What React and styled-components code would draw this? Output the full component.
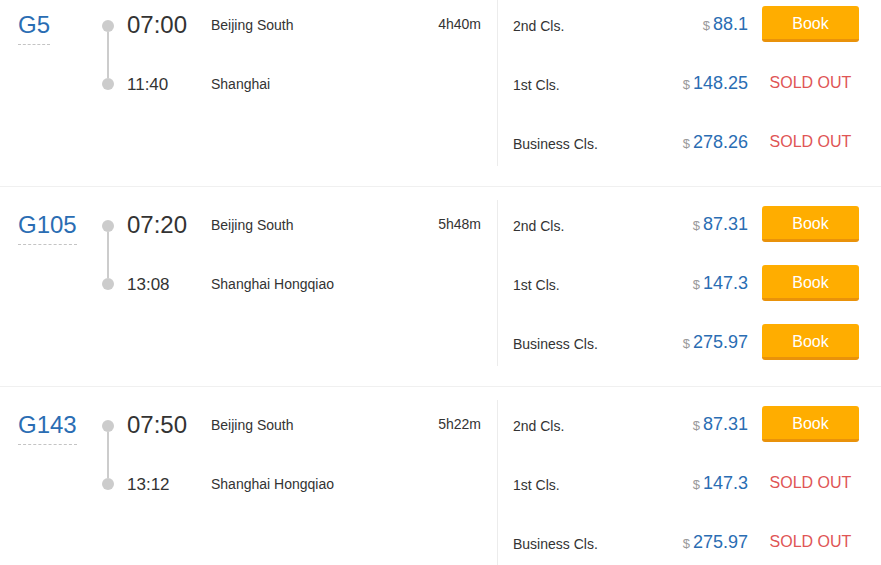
import React from 'react';
import styled, { createGlobalStyle } from 'styled-components';

const trains = [
  {
    no: 'G5', depart: '07:00', arrive: '11:40', from: 'Beijing South', to: 'Shanghai', duration: '4h40m',
    seats: [
      { cls: '2nd Cls.', price: '88.1', available: true },
      { cls: '1st Cls.', price: '148.25', available: false },
      { cls: 'Business Cls.', price: '278.26', available: false },
    ],
  },
  {
    no: 'G105', depart: '07:20', arrive: '13:08', from: 'Beijing South', to: 'Shanghai Hongqiao', duration: '5h48m',
    seats: [
      { cls: '2nd Cls.', price: '87.31', available: true },
      { cls: '1st Cls.', price: '147.3', available: true },
      { cls: 'Business Cls.', price: '275.97', available: true },
    ],
  },
  {
    no: 'G143', depart: '07:50', arrive: '13:12', from: 'Beijing South', to: 'Shanghai Hongqiao', duration: '5h22m',
    seats: [
      { cls: '2nd Cls.', price: '87.31', available: true },
      { cls: '1st Cls.', price: '147.3', available: false },
      { cls: 'Business Cls.', price: '275.97', available: false },
    ],
  },
];

const GlobalStyle = createGlobalStyle`
  body {
    margin: 0;
    background: #fff;
    font-family: "Liberation Sans", Arial, sans-serif;
    color: #333;
  }
`;

const List = styled.div`
  margin-top: -13px;
`;

const TrainRow = styled.div`
  display: flex;
  padding: 13px 22px 20px 0;
  border-bottom: 1px solid #f0f0f0;
`;

const Journey = styled.div`
  width: 497px;
  box-sizing: border-box;
  padding: 6px 16px 0 18px;
  display: grid;
  grid-template-columns: 84px 12px 97px 1fr auto;
  grid-template-rows: 36px 36px;
  row-gap: 23px;
  align-content: start;
`;

const TrainNo = styled.div`
  grid-row: 1;
  justify-self: start;
  align-self: start;
  margin-top: 6px;
  padding-bottom: 6px;
  font-size: 24px;
  line-height: 26px;
  color: #2a6db3;
  border-bottom: 1px dashed #c4c4c4;
`;

const Track = styled.div`
  grid-column: 2;
  grid-row: 1 / span 2;
  align-self: start;
  margin-top: 14px;
  height: 70px;
  display: flex;
  flex-direction: column;
  align-items: center;
`;

const Dot = styled.span`
  width: 12px;
  height: 12px;
  border-radius: 50%;
  background: #cccccc;
  flex: none;
`;

const TrackLine = styled.span`
  flex: 1;
  width: 2px;
  background: #cccccc;
`;

const Time = styled.div`
  grid-column: 3;
  padding-left: 13px;
  font-size: ${(p) => (p.$main ? '24px' : '17px')};
  line-height: 36px;
  margin-top: ${(p) => (p.$main ? '1px' : '2px')};
  color: #333;
`;

const Station = styled.div`
  grid-column: 4;
  font-size: 14px;
  line-height: 36px;
  margin-top: 1px;
  color: #333;
`;

const Duration = styled.div`
  grid-column: 5;
  grid-row: 1;
  font-size: 14px;
  line-height: 36px;
  color: #333;
`;

const Seats = styled.div`
  flex: 1;
  height: 166px;
  box-sizing: border-box;
  border-left: 1px solid #ececec;
  padding: 6px 0 0 15px;
  display: flex;
  flex-direction: column;
  gap: 23px;
`;

const SeatRow = styled.div`
  display: flex;
  align-items: center;
  height: 36px;
`;

const SeatClass = styled.div`
  flex: 1;
  font-size: 14px;
  padding-top: 3px;
  color: #333;
`;

const Price = styled.div`
  display: flex;
  align-items: baseline;
  gap: 3px;
  margin-right: 14px;
  color: #2a6db3;
  font-size: 18px;
`;

const Currency = styled.span`
  font-size: 13px;
  color: #999;
`;

const BookButton = styled.button`
  width: 97px;
  height: 36px;
  box-sizing: border-box;
  border: none;
  border-bottom: 3px solid #e9920a;
  border-radius: 3px;
  background: #ffad00;
  color: #fff;
  font-family: inherit;
  font-size: 16px;
  padding: 2px 0 0;
  cursor: pointer;
`;

const SoldOut = styled.div`
  width: 97px;
  text-align: center;
  font-size: 16px;
  color: #e05555;
`;

const Train = ({ train }) => (
  <TrainRow>
    <Journey>
      <TrainNo>{train.no}</TrainNo>
      <Track>
        <Dot />
        <TrackLine />
        <Dot />
      </Track>
      <Time $main style={{ gridRow: 1 }}>{train.depart}</Time>
      <Station style={{ gridRow: 1 }}>{train.from}</Station>
      <Duration>{train.duration}</Duration>
      <Time style={{ gridRow: 2 }}>{train.arrive}</Time>
      <Station style={{ gridRow: 2 }}>{train.to}</Station>
    </Journey>
    <Seats>
      {train.seats.map((seat) => (
        <SeatRow key={seat.cls}>
          <SeatClass>{seat.cls}</SeatClass>
          <Price>
            <Currency>$</Currency>
            {seat.price}
          </Price>
          {seat.available ? <BookButton>Book</BookButton> : <SoldOut>SOLD OUT</SoldOut>}
        </SeatRow>
      ))}
    </Seats>
  </TrainRow>
);

export default function App() {
  return (
    <>
      <GlobalStyle />
      <List>
        {trains.map((t) => (
          <Train key={t.no} train={t} />
        ))}
      </List>
    </>
  );
}
